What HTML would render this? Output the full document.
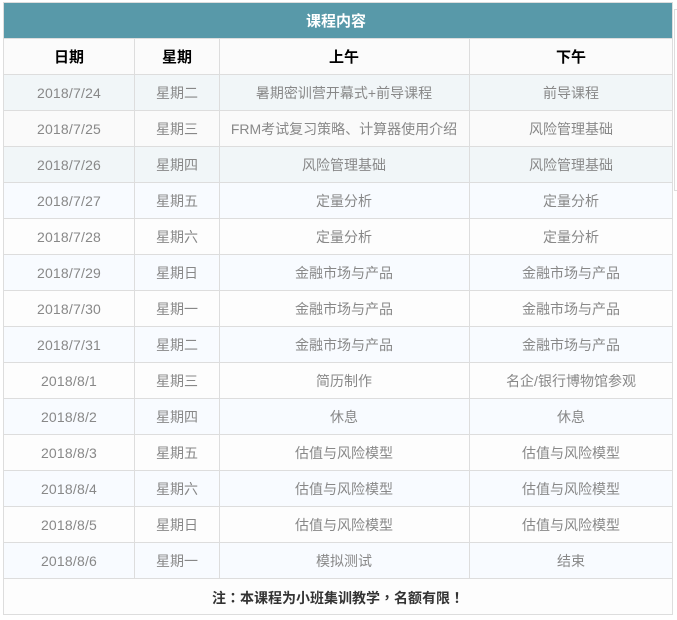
<!DOCTYPE html>
<html lang="zh">
<head>
<meta charset="utf-8">
<title>课程内容</title>
<style>
html,body{margin:0;padding:0;background:#fff;width:677px;height:620px;overflow:hidden}
body{position:relative;font-family:"Liberation Sans","Noto Sans CJK SC",sans-serif}
table{position:absolute;left:3px;top:2px;width:670px;height:613px;border-collapse:collapse;table-layout:fixed;font-size:14px;color:#888;text-align:center}
td{border:1px solid #ddd;padding:0;height:35px;line-height:20px;box-sizing:border-box}
tr{height:36px}
td:nth-child(1){letter-spacing:.2px}
td:nth-child(3){padding-right:1px}
.title td{background:#5899a9;color:#fff;font-weight:bold;border-color:#ddd;font-size:15px;letter-spacing:0;padding:2px 4px 0 0}
.head td{background:#fbfbfb;color:#000;font-weight:bold;font-size:15px;letter-spacing:0;padding-top:2px}
.a td{background:#f1f6f8}
.b td{background:#fafafa}
.c td{background:#f8fbff}
.d td{background:#fdfdfd}
.note td{background:#fdfdfd;color:#333;font-weight:bold;font-size:14px;letter-spacing:0;padding:2px 0 0}
.note span{display:inline-block;width:14px;text-align:center;font-family:"Noto Sans CJK TC",sans-serif}
.side{position:absolute;left:674px;top:9px;width:3px;height:182px;box-sizing:border-box;border-left:1px solid #ddd;border-top:1px solid #ddd;border-bottom:1px solid #ddd}
</style>
</head>
<body>
<table>
<colgroup><col style="width:131px"><col style="width:85px"><col style="width:250px"><col style="width:203px"></colgroup>
<tr class="title"><td colspan="4">课程内容</td></tr>
<tr class="head"><td>日期</td><td>星期</td><td>上午</td><td>下午</td></tr>
<tr class="a"><td>2018/7/24</td><td>星期二</td><td>暑期密训营开幕式+前导课程</td><td>前导课程</td></tr>
<tr class="b"><td>2018/7/25</td><td>星期三</td><td>FRM考试复习策略、计算器使用介绍</td><td>风险管理基础</td></tr>
<tr class="a"><td>2018/7/26</td><td>星期四</td><td>风险管理基础</td><td>风险管理基础</td></tr>
<tr class="c"><td>2018/7/27</td><td>星期五</td><td>定量分析</td><td>定量分析</td></tr>
<tr class="d"><td>2018/7/28</td><td>星期六</td><td>定量分析</td><td>定量分析</td></tr>
<tr class="c"><td>2018/7/29</td><td>星期日</td><td>金融市场与产品</td><td>金融市场与产品</td></tr>
<tr class="d"><td>2018/7/30</td><td>星期一</td><td>金融市场与产品</td><td>金融市场与产品</td></tr>
<tr class="c"><td>2018/7/31</td><td>星期二</td><td>金融市场与产品</td><td>金融市场与产品</td></tr>
<tr class="d"><td>2018/8/1</td><td>星期三</td><td>简历制作</td><td>名企/银行博物馆参观</td></tr>
<tr class="c"><td>2018/8/2</td><td>星期四</td><td>休息</td><td>休息</td></tr>
<tr class="d"><td>2018/8/3</td><td>星期五</td><td>估值与风险模型</td><td>估值与风险模型</td></tr>
<tr class="c"><td>2018/8/4</td><td>星期六</td><td>估值与风险模型</td><td>估值与风险模型</td></tr>
<tr class="d"><td>2018/8/5</td><td>星期日</td><td>估值与风险模型</td><td>估值与风险模型</td></tr>
<tr class="c"><td>2018/8/6</td><td>星期一</td><td>模拟测试</td><td>结束</td></tr>
<tr class="note"><td colspan="4">注<span>：</span>本课程为小班集训教学<span>，</span>名额有限<span>！</span></td></tr>
</table>
<div class="side"></div>
</body>
</html>
